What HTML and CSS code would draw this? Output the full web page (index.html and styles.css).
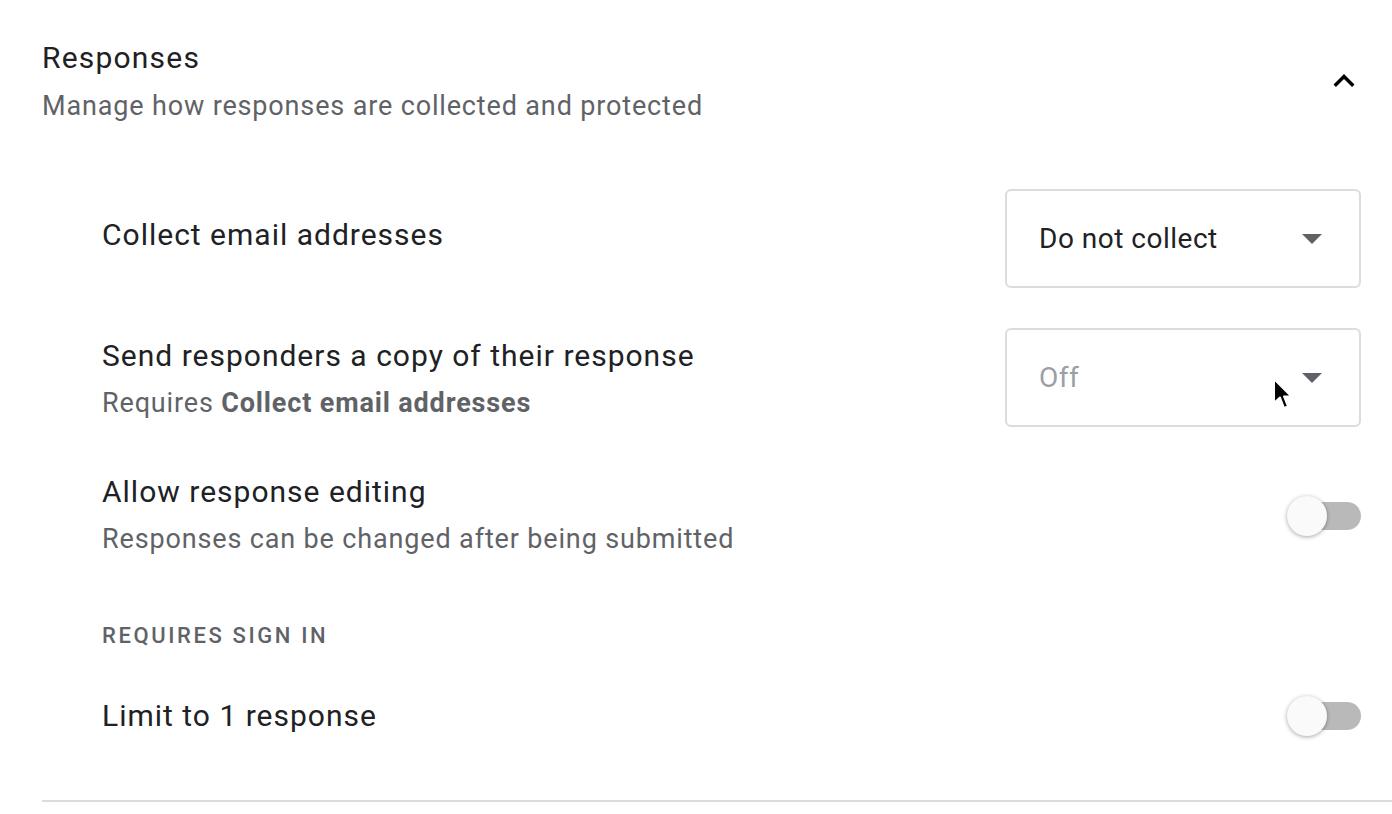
FILE: index.html
```html
<!DOCTYPE html>
<html>
<head>
<meta charset="utf-8">
<link rel="stylesheet" href="styles.css">
</head>
<body>
<section class="panel">
  <div class="header">
    <div class="header-text">
      <div class="title">Responses</div>
      <div class="subtitle">Manage how responses are collected and protected</div>
    </div>
    <svg class="chevron" viewBox="0 0 24 24" width="42" height="42"><path d="M12 8l-6 6 1.41 1.41L12 10.83l4.59 4.58L18 14z" fill="#000"/></svg>
  </div>

  <div class="rows">
    <div class="row row-first">
      <div class="label-block">
        <div class="label">Collect email addresses</div>
      </div>
      <div class="select">
        <span class="select-text">Do not collect</span>
        <span class="caret"></span>
      </div>
    </div>

    <div class="row row-second">
      <div class="label-block">
        <div class="label">Send responders a copy of their response</div>
        <div class="desc">Requires <b>Collect email addresses</b></div>
      </div>
      <div class="select disabled">
        <span class="select-text">Off</span>
        <span class="caret"></span>
        <svg class="cursor" viewBox="0 0 22 34" width="22" height="34"><path d="M2 2 L2 26 L8 20.5 L12 31 L16 29.5 L12 19.5 L19.5 19.5 Z" fill="#000" stroke="#fff" stroke-width="2" stroke-linejoin="round"/></svg>
      </div>
    </div>

    <div class="row row-toggle">
      <div class="label-block">
        <div class="label">Allow response editing</div>
        <div class="desc">Responses can be changed after being submitted</div>
      </div>
      <div class="switch"><span class="track"></span><span class="thumb"></span></div>
    </div>
  </div>

  <div class="group-label">REQUIRES SIGN IN</div>

  <div class="row row-limit">
    <div class="label-block">
      <div class="label">Limit to 1 response</div>
    </div>
    <div class="switch"><span class="track"></span><span class="thumb"></span></div>
  </div>

  <div class="divider"></div>
</section>
</body>
</html>
```

FILE: styles.css
```css
html, body {
  margin: 0;
  padding: 0;
  background: #ffffff;
}
body {
  font-family: Roboto, "Liberation Sans", Arial, sans-serif;
  color: #202124;
}
.panel {
  padding-left: 42px;
  padding-top: 40px;
}
.header {
  display: flex;
  align-items: center;
  justify-content: space-between;
  padding-right: 27px;
}
.title {
  font-size: 30px;
  line-height: 36px;
  letter-spacing: 1.2px;
  color: #202124;
}
.subtitle {
  margin-top: 10px;
  font-size: 27px;
  line-height: 40px;
  letter-spacing: 0.85px;
  color: #5f6368;
}
.chevron {
  display: block;
  margin-top: -4px;
}
.rows {
  display: flex;
  flex-direction: column;
  margin-top: 63px;
  padding-left: 60px;
  padding-right: 31px;
}
.row {
  display: flex;
  align-items: center;
  justify-content: space-between;
}
.row-first .label-block {
  padding-bottom: 7px;
}
.row-second {
  margin-top: 40px;
}
.row-second .label-block {
  padding-top: 4px;
}
.row-toggle {
  margin-top: 45px;
}
.label {
  font-size: 30px;
  line-height: 40px;
  letter-spacing: 1px;
  color: #202124;
}
.desc {
  margin-top: 7px;
  font-size: 27px;
  line-height: 40px;
  letter-spacing: 0.85px;
  color: #5f6368;
}
.desc b {
  font-weight: 700;
}
.select {
  position: relative;
  box-sizing: border-box;
  width: 356px;
  height: 99px;
  border: 2px solid #dadce0;
  border-radius: 6px;
  display: flex;
  align-items: center;
  justify-content: space-between;
  padding-left: 32px;
  padding-right: 37px;
}
.select-text {
  font-size: 28px;
  letter-spacing: 0.5px;
  color: #202124;
}
.select.disabled .select-text {
  color: #9aa0a6;
}
.caret {
  width: 0;
  height: 0;
  border-left: 10px solid transparent;
  border-right: 10px solid transparent;
  border-top: 10px solid #5f6368;
  margin-top: 1px;
}
.cursor {
  position: absolute;
  left: 265px;
  top: 47px;
}
.switch {
  position: relative;
  width: 74px;
  height: 40px;
  flex: none;
}
.track {
  position: absolute;
  left: 5px;
  top: 6px;
  width: 69px;
  height: 28px;
  border-radius: 14px;
  background: #b9b9b9;
}
.thumb {
  position: absolute;
  left: 0;
  top: 0;
  width: 40px;
  height: 40px;
  border-radius: 50%;
  background: #fafafa;
  box-shadow: 0 1px 4px rgba(0, 0, 0, 0.35);
}
.group-label {
  margin-top: 63px;
  padding-left: 60px;
  font-size: 22px;
  line-height: 28px;
  font-weight: 500;
  letter-spacing: 2.6px;
  color: #5f6368;
}
.row-limit {
  margin-top: 46px;
  padding-left: 60px;
  padding-right: 31px;
}
.divider {
  margin-top: 64px;
  height: 2px;
  background: #dadce0;
}
```
